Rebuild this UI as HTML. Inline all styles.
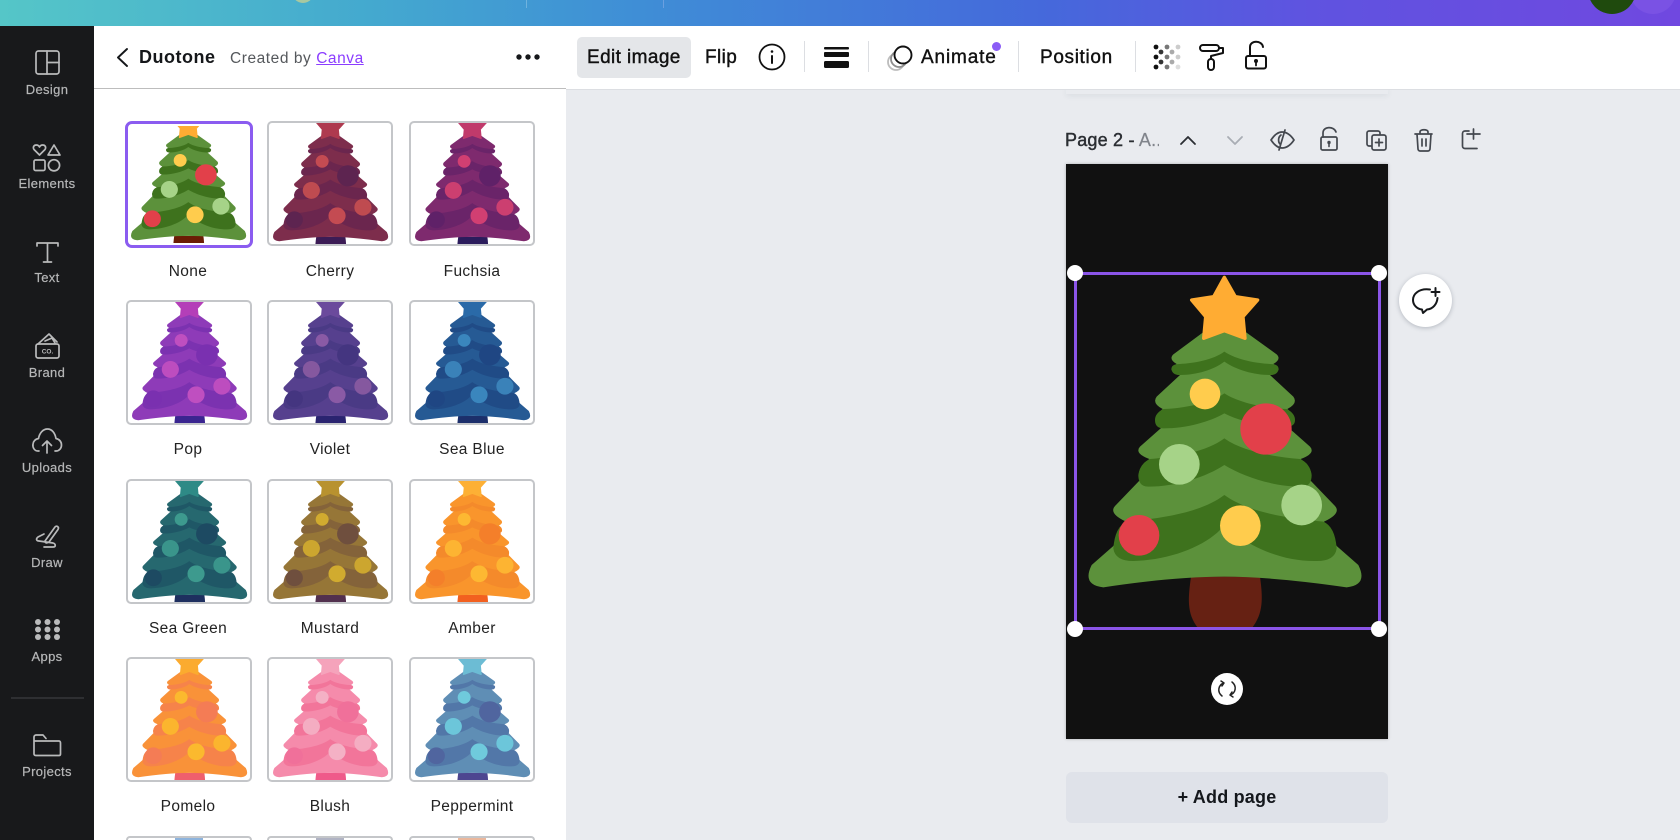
<!DOCTYPE html>
<html lang="en">
<head>
<meta charset="utf-8">
<title>Duotone</title>
<style>
html,body{margin:0;padding:0;width:1680px;height:840px;overflow:hidden;background:#e9ebef;font-family:"Liberation Sans",sans-serif;}
#root{position:relative;width:1680px;height:840px;overflow:hidden;background:#e9ebef;}
.abs,.t,.tile,.lb,.s{position:absolute;}
#top{left:0;top:0;width:1680px;height:26px;background:linear-gradient(90deg,#55c6c8 0%,#44a9cf 22%,#3f8ed6 38%,#4569db 62%,#5f53e0 78%,#7048e0 100%);overflow:hidden;}
#side{left:0;top:26px;width:94px;height:814px;background:#18191b;}
#panel{left:94px;top:26px;width:472px;height:814px;background:#fff;}
#phead{left:94px;top:88px;width:472px;height:1px;background:#bdbdbd;}
#bar{left:566px;top:26px;width:1114px;height:63px;background:#fff;border-bottom:1px solid #dcdee2;}
.s{width:94px;left:0;text-align:center;color:#b6b7b8;font-size:13px;line-height:16px;letter-spacing:.35px;-webkit-text-stroke:.2px #b6b7b8;}
.t{white-space:nowrap;color:#111;}
.m{font-size:19px;line-height:22px;letter-spacing:.4px;-webkit-text-stroke:.4px #111;}
.tile{width:126px;height:125px;box-sizing:border-box;border:2px solid #c4c6c9;border-radius:5px;overflow:hidden;background:#fff;}
.tile svg{position:absolute;left:-8px;top:-17px;width:143.4px;height:157px;}
.lb{width:140px;text-align:center;font-size:15.5px;line-height:18px;color:#222;letter-spacing:.35px;}
#sel{border:3px solid #8b55e8;}
svg.i{position:absolute;left:0;top:0;width:1680px;height:840px;pointer-events:none;}
</style>
</head>
<body>
<div id="root">
<svg width="0" height="0" style="position:absolute">
<defs>
<symbol id="tree" viewBox="0 0 1020 1140" preserveAspectRatio="none">
<path style="fill:var(--t)" d="M393 950H600C608 1010 612 1060 575 1105H415C378 1060 385 1010 393 950Z"/>
<path style="fill:var(--l)" d="M493 170L650 283Q665 298 640 312Q665 322 650 338Q640 345 630 345L700 410Q715 430 682 447Q712 470 698 492Q690 498 680 498L750 560Q768 580 722 597Q765 630 750 660L825 738Q845 760 792 785L830 858L895 915Q925 975 860 982Q640 950 493 950Q340 950 130 982Q65 975 95 915L160 858L198 785Q145 760 165 738L240 660Q225 630 268 597Q222 580 240 560L310 498Q300 498 292 492Q278 470 308 447Q275 430 290 410L360 345Q350 345 340 338Q325 322 350 312Q325 298 340 283Z"/>
<path style="fill:var(--d)" d="M493 275C530 300 590 310 630 312Q655 312 655 325Q655 345 630 345C580 345 530 330 493 305C460 330 410 345 360 345Q335 345 335 325Q335 312 360 312C400 310 460 300 493 275Z"/>
<path style="fill:var(--d)" d="M493 400C540 430 620 445 680 447Q705 460 705 480Q705 500 680 500C610 498 540 485 493 460C450 485 380 505 310 505Q285 505 285 480Q285 460 310 447C370 445 450 430 493 400Z"/>
<path style="fill:var(--d)" d="M493 535C550 575 640 590 720 597Q750 610 755 645Q755 680 725 680C640 680 550 650 493 615C440 650 350 680 265 680Q235 680 235 645Q240 610 270 597C350 590 440 575 493 535Z"/>
<path style="fill:var(--d)" d="M493 705C570 760 690 775 790 785Q825 800 830 865Q825 903 770 903C680 905 590 870 530 825L493 800L480 810C430 860 330 900 220 903Q165 903 160 865Q165 800 200 785C300 775 420 760 493 705Z"/>
<path style="fill:var(--s);stroke:var(--s)" stroke-width="10" stroke-linejoin="round" d="M493 52L526 110L593 120L549 170L555 235L493 212L431 235L437 170L395 120L461 110Z"/>
<circle cx="435" cy="402" r="46" style="fill:var(--y)"/>
<circle cx="618" cy="507" r="77" style="fill:var(--r)"/>
<circle cx="358" cy="613" r="61" style="fill:var(--g)"/>
<circle cx="725" cy="735" r="61" style="fill:var(--g)"/>
<circle cx="541" cy="797" r="61" style="fill:var(--y)"/>
<circle cx="237" cy="826" r="61" style="fill:var(--r)"/>
</symbol>
</defs>
</svg>

<div class="abs" id="top">
  <div class="abs" style="left:293px;top:0;width:20px;height:3px;background:#a8c8a0;clip-path:circle(11px at 10px -8px)"></div>
  <div class="abs" style="left:526px;top:0;width:1px;height:8px;background:#6fb3de"></div>
  <div class="abs" style="left:663px;top:0;width:1px;height:8px;background:#6b9fe0"></div>
  <div class="abs" style="left:1630px;top:0;width:46px;height:14px;background:#7a52e4;clip-path:circle(23px at 23px -9px)"></div>
  <div class="abs" style="left:1588px;top:0;width:48px;height:14px;background:#1f4a0d;clip-path:circle(24px at 24px -10px)"></div>
</div>
<div class="abs" id="side"></div>
<div class="abs" id="panel"></div>
<div class="abs" style="left:1066px;top:88px;width:322px;height:6px;box-shadow:0 2px 6px rgba(40,50,70,.07)"></div>
<div class="abs" id="bar"></div>
<div class="abs" id="phead"></div>

<!-- sidebar labels -->
<div class="s" style="top:82px">Design</div>
<div class="s" style="top:176px">Elements</div>
<div class="s" style="top:270px">Text</div>
<div class="s" style="top:365px">Brand</div>
<div class="s" style="top:460px">Uploads</div>
<div class="s" style="top:555px">Draw</div>
<div class="s" style="top:649px">Apps</div>
<div class="s" style="top:764px">Projects</div>
<div class="abs" style="left:11px;top:697px;width:73px;height:2px;background:#2e2f32"></div>

<!-- panel header -->
<div class="t" style="left:139px;top:46px;font-size:18px;line-height:22px;font-weight:bold;letter-spacing:.5px;color:#15171a">Duotone</div>
<div class="t" style="left:230px;top:49px;font-size:15.5px;line-height:19px;color:#55585c;letter-spacing:.55px">Created by <span style="color:#8b3dff;text-decoration:underline">Canva</span></div>

<!-- tiles -->
<div class="tile" style="left:125px;top:121px;width:128px;height:127px;border:3px solid #8b5cf0;border-radius:7px;--s:#ffac33;--l:#5c913b;--d:#3e721d;--t:#6b1d05;--y:#ffcc4d;--r:#e2404a;--g:#a6d388">
  <div class="abs" style="left:2px;top:2px;right:2px;bottom:2px;overflow:hidden"><svg style="left:-11px;top:-21px"><use href="#tree"/></svg></div>
</div>
<div class="lb" style="left:118px;top:263px">None</div>

<div class="tile" style="left:267px;top:121px;--s:#ae3a4f;--l:#7d2d4c;--d:#6b264e;--t:#3c1c55;--y:#c44b52;--r:#5d2450;--g:#bf4b50"><svg><use href="#tree"/></svg></div>
<div class="lb" style="left:260px;top:263px">Cherry</div>
<div class="tile" style="left:409px;top:121px;--s:#c03a6b;--l:#7e2a6e;--d:#6a2469;--t:#2b1c5c;--y:#d13f72;--r:#5f2168;--g:#cc3f70"><svg><use href="#tree"/></svg></div>
<div class="lb" style="left:402px;top:263px">Fuchsia</div>

<div class="tile" style="left:126px;top:300px;--s:#b43fb8;--l:#8e3bb8;--d:#7b32b0;--t:#3a2590;--y:#bf4fc0;--r:#7a30b0;--g:#bd4dbf"><svg><use href="#tree"/></svg></div>
<div class="lb" style="left:118px;top:441px">Pop</div>
<div class="tile" style="left:267px;top:300px;--s:#6b4a9c;--l:#56408e;--d:#4a3a85;--t:#2a2470;--y:#8a5aa5;--r:#443580;--g:#85589f"><svg><use href="#tree"/></svg></div>
<div class="lb" style="left:260px;top:441px">Violet</div>
<div class="tile" style="left:409px;top:300px;--s:#2a6aa8;--l:#265a94;--d:#204b86;--t:#1c2f6b;--y:#3a86bd;--r:#1f4683;--g:#3a82b9"><svg><use href="#tree"/></svg></div>
<div class="lb" style="left:402px;top:441px">Sea Blue</div>

<div class="tile" style="left:126px;top:479px;--s:#2e8a86;--l:#26686f;--d:#1f5766;--t:#1e2f5f;--y:#3d9a8e;--r:#1d4a62;--g:#3a958b"><svg><use href="#tree"/></svg></div>
<div class="lb" style="left:118px;top:620px">Sea Green</div>
<div class="tile" style="left:267px;top:479px;--s:#b8922f;--l:#967637;--d:#84633a;--t:#52304e;--y:#d1ab2f;--r:#6f4f3e;--g:#cca62f"><svg><use href="#tree"/></svg></div>
<div class="lb" style="left:260px;top:620px">Mustard</div>
<div class="tile" style="left:409px;top:479px;--s:#fdb035;--l:#f9952c;--d:#f48a2b;--t:#f2601f;--y:#fdb832;--r:#f47f2a;--g:#fdb432"><svg><use href="#tree"/></svg></div>
<div class="lb" style="left:402px;top:620px">Amber</div>

<div class="tile" style="left:126px;top:657px;--s:#fbab2f;--l:#f99239;--d:#f6834a;--t:#ef5f6d;--y:#fbb92e;--r:#f47c55;--g:#fbb52e"><svg><use href="#tree"/></svg></div>
<div class="lb" style="left:118px;top:798px">Pomelo</div>
<div class="tile" style="left:267px;top:657px;--s:#f5a3bb;--l:#f58bab;--d:#f2759a;--t:#ef5a8a;--y:#f4b1c5;--r:#f0709a;--g:#f4adc2"><svg><use href="#tree"/></svg></div>
<div class="lb" style="left:260px;top:798px">Blush</div>
<div class="tile" style="left:409px;top:657px;--s:#6cbcd4;--l:#5f8eb5;--d:#5277a8;--t:#4d4690;--y:#6fcadc;--r:#50659f;--g:#6cc6da"><svg><use href="#tree"/></svg></div>
<div class="lb" style="left:402px;top:798px">Peppermint</div>

<div class="tile" style="left:126px;top:836px;height:4px;border-bottom:0;border-radius:5px 5px 0 0"><div class="abs" style="left:47px;top:0;width:28px;height:2px;background:#8db3dc"></div></div>
<div class="tile" style="left:267px;top:836px;height:4px;border-bottom:0;border-radius:5px 5px 0 0"><div class="abs" style="left:47px;top:0;width:28px;height:2px;background:#b0b3c3"></div></div>
<div class="tile" style="left:409px;top:836px;height:4px;border-bottom:0;border-radius:5px 5px 0 0"><div class="abs" style="left:47px;top:0;width:28px;height:2px;background:#eab79c"></div></div>

<!-- toolbar -->
<div class="abs" style="left:577px;top:37px;width:114px;height:41px;background:#e4e6e9;border-radius:5px"></div>
<div class="t m" style="left:587px;top:47px">Edit image</div>
<div class="t m" style="left:705px;top:47px">Flip</div>
<div class="t m" style="left:921px;top:47px;letter-spacing:.85px">Animate</div>
<div class="t m" style="left:1040px;top:47px;letter-spacing:.65px">Position</div>
<div class="abs" style="left:804px;top:41px;width:1px;height:31px;background:#dcdee2"></div>
<div class="abs" style="left:868px;top:41px;width:1px;height:31px;background:#dcdee2"></div>
<div class="abs" style="left:1018px;top:41px;width:1px;height:31px;background:#dcdee2"></div>
<div class="abs" style="left:1135px;top:41px;width:1px;height:31px;background:#dcdee2"></div>
<div class="abs" style="left:992px;top:42px;width:9px;height:9px;border-radius:50%;background:#8b5cf6"></div>

<!-- page -->
<div class="t" style="left:1065px;top:129px;font-size:18px;line-height:22px;letter-spacing:.2px;color:#2b2e33;-webkit-text-stroke:.45px #2b2e33;width:94px;overflow:hidden">Page 2 - <span style="color:#80848b;-webkit-text-stroke:.2px #80848b">A..</span></div>
<div class="abs" style="left:1066px;top:164px;width:322px;height:575px;background:#111;box-shadow:0 0 3px rgba(0,0,0,.25)"></div>
<svg class="abs" style="left:1060px;top:260px;width:340px;height:380px;--s:#ffac33;--l:#5c913b;--d:#3e721d;--t:#662113;--y:#ffcc4d;--r:#e2404a;--g:#a6d388"><use href="#tree" width="340" height="380"/></svg>
<div class="abs" style="left:1074px;top:272px;width:307px;height:358px;box-sizing:border-box" id="sel"></div>
<div class="abs" style="left:1067px;top:265px;width:16px;height:16px;border-radius:50%;background:#fff"></div>
<div class="abs" style="left:1371px;top:265px;width:16px;height:16px;border-radius:50%;background:#fff"></div>
<div class="abs" style="left:1067px;top:621px;width:16px;height:16px;border-radius:50%;background:#fff"></div>
<div class="abs" style="left:1371px;top:621px;width:16px;height:16px;border-radius:50%;background:#fff"></div>
<div class="abs" style="left:1211px;top:673px;width:32px;height:32px;border-radius:50%;background:#fff"></div>
<div class="abs" style="left:1399px;top:274px;width:53px;height:53px;border-radius:50%;background:#fff;box-shadow:0 1px 5px rgba(40,50,70,.28)"></div>
<div class="abs" style="left:1066px;top:772px;width:322px;height:51px;background:#dfe2e9;border-radius:6px"></div>
<div class="t" style="left:1066px;width:322px;top:786px;text-align:center;font-size:18px;line-height:22px;font-weight:bold;color:#14171c;letter-spacing:.2px">+ Add page</div>

<!-- icons -->
<svg class="i" viewBox="0 0 1680 840" fill="none" stroke-linecap="round" stroke-linejoin="round">
  <g stroke="#b9babb" stroke-width="1.7">
    <rect x="36" y="51" width="23" height="23" rx="2.5"/><path d="M47 51V74M47 62.5H59"/>
    <path d="M39.5 155L34 149.5C32.5 147 34 145 36.3 145C38 145 39 146 39.5 147C40 146 41 145 42.7 145C45 145 46.5 147 45 149.5Z"/>
    <path d="M54 145L60 155H48Z"/>
    <rect x="34" y="160" width="11" height="10.5" rx="1.5"/><circle cx="54" cy="165.3" r="5.6"/>
    <path d="M37 246V243H58V246M47.5 243V262M43.5 262H51.5"/>
    <rect x="36" y="344" width="23" height="14" rx="2"/><path d="M38 344L49 334L57 342M45 341L52 338L55 343"/>
    <path d="M39 451H38C34 451 32.5 447 33 444C33.5 440.5 36 439 38.5 438.5C39.5 433 43 429 47.5 429C52 429 55 433 56 438.5C59 439 61.5 441.5 61.5 445C61.5 448.5 59 451 56 451H55M47 453V441M42.5 445.5L47 441L51.5 445.5"/>
    <path d="M45 541L55 527C56.5 525 59.5 527 58 529.5L49 542C47 543.5 44.5 543 45 541ZM44 534L38 537C35.5 539 36.5 541 39 541L53 543C56 544 56 547 53 547H44"/>
    <path d="M34 741V737C34 736 35 735 36 735H43L46 738.5M34 741H59C60 741 60.5 742 60.5 743V754C60.5 755 60 755.5 59 755.5H36C35 755.5 34 755 34 754Z"/>
  </g>
  <g fill="#b9babb">
    <circle cx="38" cy="622" r="3"/><circle cx="47.5" cy="622" r="3"/><circle cx="57" cy="622" r="3"/>
    <circle cx="38" cy="629.5" r="3"/><circle cx="47.5" cy="629.5" r="3"/><circle cx="57" cy="629.5" r="3"/>
    <circle cx="38" cy="637" r="3"/><circle cx="47.5" cy="637" r="3"/><circle cx="57" cy="637" r="3"/>
    <text x="47.5" y="353.5" text-anchor="middle" font-family="'Liberation Sans',sans-serif" font-size="6.5" font-weight="bold">CO.</text>
  </g>
  <path d="M127 49L118 57.5L127 66" stroke="#15171a" stroke-width="1.9"/>
  <g fill="#15171a"><circle cx="519" cy="57" r="2.7"/><circle cx="528" cy="57" r="2.7"/><circle cx="537" cy="57" r="2.7"/></g>

  <!-- toolbar icons -->
  <circle cx="772" cy="57" r="12.5" stroke="#111" stroke-width="1.8"/>
  <path d="M772 56V63" stroke="#111" stroke-width="2"/><circle cx="772" cy="51.5" r="1.3" fill="#111"/>
  <rect x="824" y="47" width="25" height="2.5" rx="1" fill="#111"/>
  <rect x="824" y="52" width="25" height="5" rx="1" fill="#111"/>
  <rect x="824" y="61" width="25" height="7" rx="1.5" fill="#111"/>
  <circle cx="896" cy="62" r="8" stroke="#bdbdbd" stroke-width="1.8"/>
  <circle cx="899" cy="59" r="8" stroke="#8f8f8f" stroke-width="1.8" fill="#fff"/>
  <circle cx="903" cy="55" r="8.5" stroke="#111" stroke-width="1.9" fill="#fff"/>
  <g>
    <circle cx="1156" cy="47" r="2.4" fill="#111"/><circle cx="1156" cy="57" r="2.4" fill="#111"/><circle cx="1156" cy="67" r="2.4" fill="#111"/>
    <circle cx="1161" cy="52" r="2.4" fill="#333"/><circle cx="1161" cy="62" r="2.4" fill="#333"/>
    <circle cx="1167" cy="47" r="2.4" fill="#777"/><circle cx="1167" cy="57" r="2.4" fill="#777"/><circle cx="1167" cy="67" r="2.4" fill="#777"/>
    <circle cx="1172" cy="52" r="2.4" fill="#aaa"/><circle cx="1172" cy="62" r="2.4" fill="#aaa"/>
    <circle cx="1178" cy="47" r="2.4" fill="#ccc"/><circle cx="1178" cy="57" r="2.4" fill="#ccc"/><circle cx="1178" cy="67" r="2.4" fill="#ddd"/>
  </g>
  <g stroke="#111" stroke-width="2">
    <rect x="1200" y="45" width="19" height="6" rx="3"/><path d="M1219 48H1223V53L1211 56V59"/><rect x="1208" y="59" width="6" height="11" rx="3"/>
    <rect x="1246" y="56" width="20" height="12.5" rx="2"/><path d="M1250 56V47C1250 40 1262 40 1263 47"/>
  </g>
  <circle cx="1256" cy="61" r="2" fill="#111"/><path d="M1256 61V65.5" stroke="#111" stroke-width="1.8"/>

  <!-- page icons -->
  <path d="M1181 144L1188 137L1195 144" stroke="#2b2e33" stroke-width="1.8"/>
  <path d="M1228 137L1235 144L1242 137" stroke="#a9adb4" stroke-width="1.8"/>
  <g stroke="#44484f" stroke-width="1.7">
    <path d="M1271 140C1275 134 1279 132 1282 132C1286 132 1290 134 1294 140C1290 146 1286 148 1282 148C1279 148 1275 146 1271 140Z"/>
    <path d="M1285 130L1279 150M1281 135C1278 137 1278 142 1280 144"/>
    <rect x="1321" y="137" width="16" height="13" rx="1.5"/><path d="M1323 137V133C1323 126 1334 126 1336 132"/>
    <rect x="1367" y="131" width="13" height="15" rx="2"/><rect x="1372" y="135" width="14" height="15" rx="2" fill="#e9ebef"/>
    <path d="M1379 139V146M1375.5 142.5H1382.5"/>
    <path d="M1415 134H1432M1420 134V132C1420 129 1428 129 1428 132V134M1417 134L1418 149C1418 150 1419 151 1420 151H1428C1429 151 1430 150 1430 149L1431 134M1422 139V146M1426 139V146"/>
    <path d="M1469 131H1465C1463.5 131 1462.5 132 1462.5 133.5V146C1462.5 147.5 1463.5 148.5 1465 148.5H1477M1473.5 129V139M1467 134H1480"/>
  </g>
  <circle cx="1329" cy="142.5" r="1.7" fill="#44484f"/><path d="M1329 143V146.5" stroke="#44484f" stroke-width="1.6"/>

  <!-- rotate -->
  <g stroke="#222" stroke-width="1.5">
    <path d="M1222 696C1217 692 1218 685 1224 683L1221 681M1224 683L1222 686"/>
    <path d="M1232 682C1237 686 1236 693 1230 695L1233 697M1230 695L1232 692"/>
  </g>
  <!-- comment -->
  <path d="M1430 289.5C1419 288 1413 294 1413 300C1413 305 1417 309 1422 309.5L1423 313L1427 309.5C1433 309 1437 304 1437.5 298" stroke="#16181b" stroke-width="2"/>
  <path d="M1435.5 288V296M1431.5 292H1439.5" stroke="#16181b" stroke-width="2"/>
</svg>
</div>
</body>
</html>
